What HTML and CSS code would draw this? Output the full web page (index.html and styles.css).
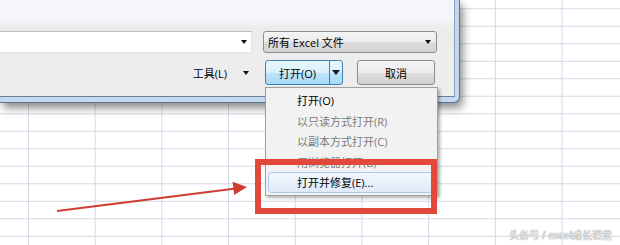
FILE: index.html
```html
<!DOCTYPE html>
<html lang="zh-CN">
<head>
  <meta charset="UTF-8">
  <title>打开文件</title>
  <link rel="stylesheet" href="styles.css">
</head>
<body>
  <div class="sheet">
    <div class="dialog">
      <div class="panel">
        <div class="row">
          <div class="filename"><span class="arrow"></span></div>
          <div class="filetype"><span>所有 Excel 文件</span><span class="arrow"></span></div>
        </div>
        <div class="row actions">
          <div class="tools"><span>工具(L)</span><span class="arrow"></span></div>
          <div class="split">
            <span class="split-main">打开(O)</span>
            <span class="split-drop"><span class="arrow"></span></span>
          </div>
          <div class="btn">取消</div>
        </div>
      </div>
    </div>

    <ul class="menu">
      <li>打开(O)</li>
      <li class="off">以只读方式打开(R)</li>
      <li class="off">以副本方式打开(C)</li>
      <li class="off">用浏览器打开(B)</li>
      <li class="hot">打开并修复(E)...</li>
    </ul>

    <div class="callout"></div>

    <svg class="pointer" width="620" height="245" viewBox="0 0 620 245">
      <line x1="57" y1="211" x2="236" y2="188.5" stroke="#cf3d32" stroke-width="2" />
      <polygon points="247,187 232.6,181.8 234.2,195" fill="#cf3d32" />
    </svg>

    <div class="watermark">头条号 / excel成长课堂</div>
  </div>
</body>
</html>
```

FILE: styles.css
```css
body { margin: 0; font-family: "Open Sans", "Noto Sans CJK SC", sans-serif; font-size: 11px; color: #000; }
.sheet {
  position: relative; width: 620px; height: 245px; overflow: hidden; background-color: #fff;
  background-image: linear-gradient(to right, #d3d8e6 1px, transparent 1px), linear-gradient(to bottom, #d3d8e6 1px, transparent 1px);
  background-size: 66.7px 100%, 100% 17.5px;
  background-position: 28px 0, 0 8.3px;
}

.dialog {
  width: 460px; height: 103px; box-sizing: border-box; padding: 0 4px 5px 0;
  background: #c3d9f0; border-right: 1px solid #61738a; border-bottom: 1px solid #61738a;
  border-bottom-right-radius: 6px; box-shadow: 3px 5px 8px rgba(0,0,0,0.45);
}
.panel {
  height: 97px; box-sizing: border-box; padding-top: 31px;
  border-right: 1px solid #8ea2b9; border-bottom: 1px solid #6f8094;
  background: linear-gradient(#f4f6fb 0, #f4f6fb 18px, #ececec 28px, #eeeeee 100%);
}
.row { display: flex; align-items: center; }
.actions { margin-top: 7px; height: 25px; justify-content: flex-end; padding-right: 19px; }

.arrow { display: inline-block; width: 0; height: 0; border-left: 3.5px solid transparent; border-right: 3.5px solid transparent; border-top: 4px solid #111; }

.filename {
  margin-left: -2px; width: 254px; height: 22px; box-sizing: border-box; background: #fff;
  border: 1px solid #e0e5ec; border-top-color: #b8bcc4;
  display: flex; align-items: center; justify-content: flex-end; padding-right: 4px;
}
.filetype {
  margin-left: 11px; width: 174px; height: 22px; box-sizing: border-box;
  border: 1px solid #8d8d8d; border-radius: 3px;
  background: linear-gradient(#f4f4f4 0, #ececec 50%, #dcdcdc 51%, #d3d3d3 100%);
  display: flex; align-items: center; justify-content: space-between; padding: 0 5px 0 4px;
}

.tools { display: flex; align-items: center; margin-right: 16px; }
.tools .arrow { margin-left: 16px; }

.split {
  display: flex; width: 78px; height: 25px; box-sizing: border-box; margin-right: 14px;
  border: 1px solid #3c7fb1; border-radius: 3px;
  background: linear-gradient(#eaf6fd 0, #d9f0fc 50%, #bee6fd 51%, #a7d9f5 100%);
}
.split-main { flex: 1; display: flex; align-items: center; justify-content: center; border-right: 1px solid #3c7fb1; }
.split-drop { width: 12px; display: flex; align-items: center; justify-content: center; }
.split-drop .arrow { border-left-width: 4px; border-right-width: 4px; border-top-width: 5px; border-top-color: #0d1a2a; }

.btn {
  width: 78px; height: 25px; box-sizing: border-box; border: 1px solid #8a8a8a; border-radius: 3px;
  background: linear-gradient(#f4f4f4 0, #ececec 50%, #dedede 51%, #d2d2d2 100%);
  display: flex; align-items: center; justify-content: center;
}

.menu {
  position: absolute; left: 265px; top: 87px; width: 173px; box-sizing: border-box;
  margin: 0; padding: 2px; list-style: none;
  background: #f2f2f2; border: 1px solid #a0a0a0; box-shadow: 2px 2px 3px rgba(0,0,0,0.3);
}
.menu li { height: 20.5px; line-height: 20.5px; box-sizing: border-box; padding-left: 28px; border: 1px solid transparent; border-radius: 3px; }
.menu .off { color: #7c7c7c; }
.menu .hot { background: linear-gradient(#f2f7fd, #dfeaf8); border-color: #aecbef; }

.callout {
  position: absolute; left: 255px; top: 159px; width: 182px; height: 55px; box-sizing: border-box;
  border: 6px solid #e2493b;
}
.pointer { position: absolute; left: 0; top: 0; }

.watermark {
  position: absolute; right: 8px; bottom: 3px; font-size: 10px; color: #f4f4f4;
  text-shadow: 0 0 1px #8a8a8a, 0 0 1px #8a8a8a;
}
```
